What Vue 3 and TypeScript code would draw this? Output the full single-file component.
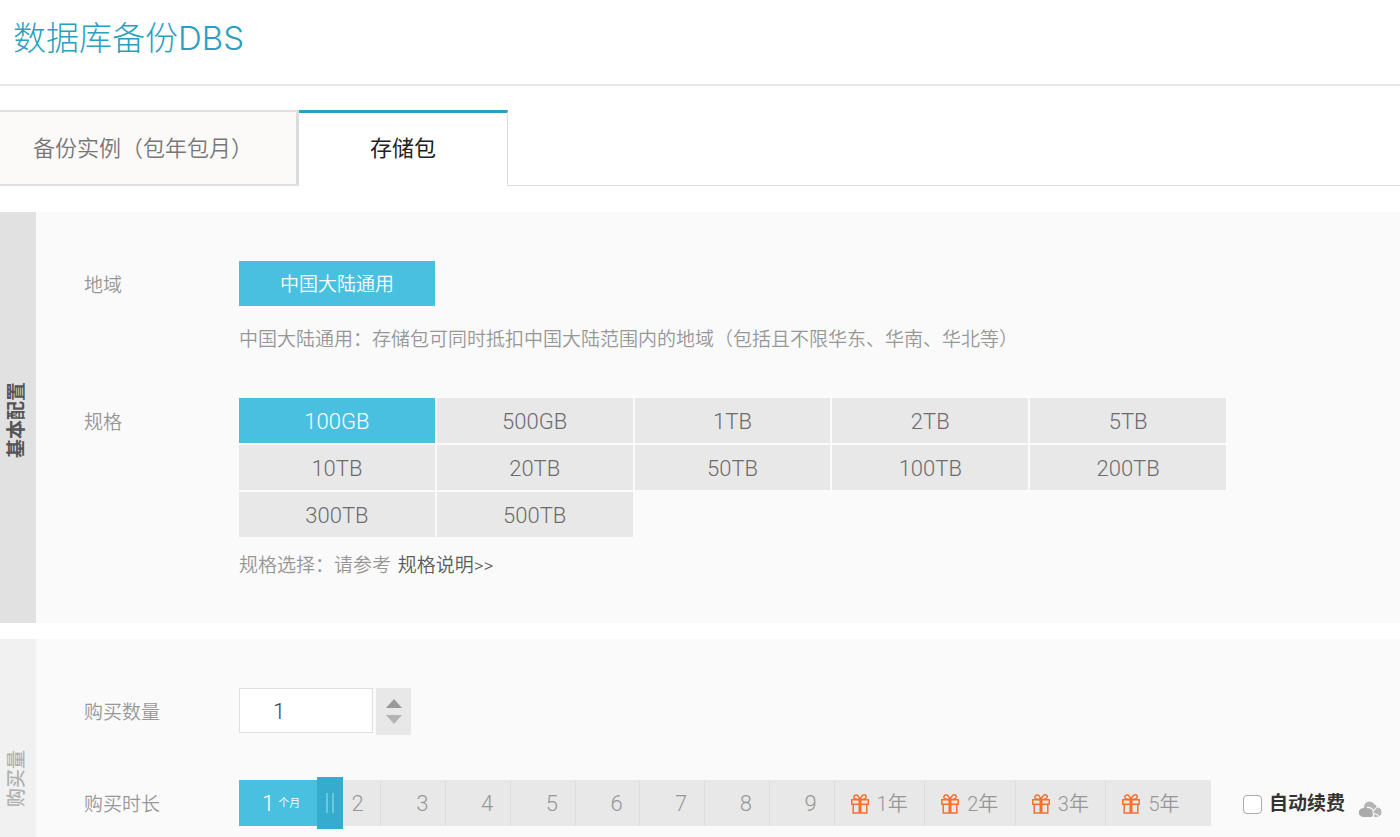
<script setup lang="ts">
import { ref } from 'vue'

interface Term {
  value: string
  gift: boolean
}

const tabs = ['备份实例（包年包月）', '存储包']
const activeTab = ref(1)

const specs = [
  '100GB', '500GB', '1TB', '2TB', '5TB',
  '10TB', '20TB', '50TB', '100TB', '200TB',
  '300TB', '500TB',
]
const spec = ref('100GB')

const quantity = ref(1)
const terms: Term[] = [
  ...[2, 3, 4, 5, 6, 7, 8, 9].map((n) => ({ value: String(n), gift: false })),
  ...[1, 2, 3, 5].map((n) => ({ value: `${n}年`, gift: true })),
]
const term = ref(0)
const autoRenew = ref(false)
</script>

<template>
  <div class="page">
    <header class="header">
      <h1>数据库备份DBS</h1>
    </header>

    <nav class="tabs">
      <button
        v-for="(tab, i) in tabs"
        :key="tab"
        type="button"
        class="tab"
        :class="{ active: i === activeTab }"
        @click="activeTab = i"
      >{{ tab }}</button>
      <span class="tabs-rest"></span>
    </nav>

    <section class="panel">
      <h2 class="side"><span>基本配置</span></h2>
      <div class="body">
        <div class="row">
          <span class="label">地域</span>
          <div class="value">
            <div class="grid"><button type="button" class="option region selected">中国大陆通用</button></div>
            <p class="hint region-hint">中国大陆通用：存储包可同时抵扣中国大陆范围内的地域（包括且不限华东、华南、华北等）</p>
          </div>
        </div>
        <div class="row">
          <span class="label">规格</span>
          <div class="value">
            <div class="grid">
              <button
                v-for="s in specs"
                :key="s"
                type="button"
                class="option"
                :class="{ selected: s === spec }"
                @click="spec = s"
              >{{ s }}</button>
            </div>
            <p class="hint">规格选择：请参考 <a href="#spec">规格说明&gt;&gt;</a></p>
          </div>
        </div>
      </div>
    </section>

    <section class="panel purchase">
      <h2 class="side light"><span>购买量</span></h2>
      <div class="body">
        <div class="row">
          <label class="label" for="quantity">购买数量</label>
          <div class="quantity">
            <input id="quantity" v-model.number="quantity" type="text" inputmode="numeric">
            <div class="stepper">
              <button type="button" aria-label="增加" @click="quantity++">
                <svg width="16" height="9" viewBox="0 0 16 9"><path d="M8 0 16 9H0z" fill="#999" /></svg>
              </button>
              <button type="button" aria-label="减少" @click="quantity = Math.max(1, quantity - 1)">
                <svg width="16" height="9" viewBox="0 0 16 9"><path d="M0 0h16L8 9z" fill="#b3b3b3" /></svg>
              </button>
            </div>
          </div>
        </div>
        <div class="row">
          <label class="label" for="term">购买时长</label>
          <div class="duration">
            <div class="track">
              <button type="button" class="segment first" @click="term = 0">1<small>个月</small></button>
              <button
                v-for="(t, i) in terms"
                :key="t.value"
                type="button"
                class="segment"
                :class="{ year: t.gift }"
                @click="term = i + 1"
              >
                <svg v-if="t.gift" width="18" height="20" viewBox="0 0 18 20" fill="none" stroke="#f5702f" stroke-width="1.5">
                  <path d="M.8 5.800h16.400v4.400H.8zM2.200 10.200v8.900h13.600v-8.900" />
                  <path d="M9 6v13" stroke-width="3" />
                  <path d="M8.600 5.600C5.500 5.600 2.800 5 2.800 3.200 2.800.7 6 .3 7.200 2c.9 1.200 1.400 2.400 1.400 3.600zM9.400 5.600C9.400 4 10.300 2.400 11.600 1.400c1.700-1.300 3.900-.4 3.600 1.500-.3 1.900-2.800 2.700-5.800 2.700z" />
                </svg>
                <span>{{ t.value }}</span>
              </button>
              <input id="term" v-model.number="term" class="handle" type="range" min="0" max="12">
            </div>
            <label class="renew">
              <input v-model="autoRenew" type="checkbox">
              <span>自动续费</span>
            </label>
            <svg class="cloud" width="23" height="17" viewBox="0 0 23 17">
              <circle cx="10.500" cy="6" r="5.500" fill="#b5b5b5" />
              <path d="M4.500 16a4.500 4.500 0 0 1-.4-9c2-.4 3.400.2 4.400 1.200 2.400-.2 4.200.9 5 2.800 1.200 2.600-.2 5-2.500 5z" fill="#aaa" />
              <path d="M11 3.500c4-1.500 6.500.5 7 2.800 5 .2 6 6.500 2.500 8.700-1.500 1-4 1-6.500 1z" fill="#b5b5b5" />
              <path d="M8 6.500c3-.5 5 .8 6.500 3.500M18.500 5.500 14 10.500l1 5.500M15 12.500l5 2" fill="none" stroke="#fafafa" stroke-width="1.100" />
            </svg>
          </div>
        </div>
      </div>
    </section>
  </div>
</template>

<style>
body {
  margin: 0;
}
</style>

<style scoped>
.page {
  height: 100vh;
  overflow: hidden;
  background: #fff;
  color: #979797;
  font-family: Roboto, "Noto Sans CJK SC", sans-serif;
  font-size: 19px;
  font-weight: 350;
  line-height: 28px;
}

.page * {
  box-sizing: border-box;
}

button,
input {
  margin: 0;
  padding: 0;
  border: 0;
  border-radius: 0;
  font: inherit;
  color: inherit;
}

button {
  cursor: pointer;
}

.header {
  height: 86px;
  padding: 14px 13px 0;
  border-bottom: 2px solid #e8e8e8;
}

h1 {
  margin: 0;
  color: #2a9fbf;
  font-family: Inter, "Noto Sans CJK SC", sans-serif;
  font-size: 33px;
  font-weight: 300;
  line-height: 48px;
}

.tabs {
  display: flex;
  height: 76px;
  margin: 24px 0 26px;
}

.tab {
  width: 299px;
  padding: 2px 10px 0 0;
  border-top: 2px solid #e0e0e0;
  border-right: 3px solid #ddd;
  border-bottom: 2px solid #e0e0e0;
  background: #fbfaf8;
  color: #777;
  font-size: 22px;
}

.tab.active {
  width: 209px;
  padding: 0 0 2px;
  border-top: 3px solid #2a9fbf;
  border-right: 1px solid #ddd;
  border-bottom: 0;
  background: #fff;
  color: #222;
  font-weight: 400;
}

.tabs-rest {
  flex: 1;
  border-bottom: 1px solid #ddd;
}

.panel {
  display: flex;
  margin-bottom: 16px;
  background: #fafafa;
}

.purchase {
  min-height: 274px;
}

.side {
  display: flex;
  flex: none;
  align-items: center;
  justify-content: center;
  width: 36px;
  margin: 0;
  padding: 6px 2px 0 0;
  background: #e1e1e1;
  color: #555;
  font-size: 19px;
  font-weight: 700;
}

.side.light {
  background: #f1f1f1;
  color: #b0b0b0;
  font-weight: 500;
}

.side span {
  writing-mode: vertical-rl;
  text-orientation: sideways;
  transform: rotate(180deg);
}

.body {
  flex: 1;
  min-width: 0;
  padding: 49px 16px 43px 48px;
}

.row {
  display: flex;
  align-items: flex-start;
}

.row + .row {
  margin-top: 44px;
}

.row:has(.quantity) + .row {
  margin-top: 43px;
}

.label {
  flex: none;
  width: 155px;
  line-height: 49px;
}

.value {
  flex: 1;
}

.grid {
  display: grid;
  grid-template-columns: repeat(5, 1fr);
  gap: 2px;
  max-width: 987px;
}

.option {
  height: 45px;
  padding-top: 2px;
  background: #e8e8e8;
  color: #6c6c6c;
  font-size: 22px;
}

.option.selected {
  background: #49c0e0;
  color: #fff;
}

.option.region {
  font-size: 19px;
}

.hint {
  margin: 15px 0 0;
}

.region-hint {
  margin-top: 20px;
}

.hint a {
  margin-left: 2px;
  color: #5c5c5c;
  text-decoration: none;
}

.quantity {
  display: flex;
  gap: 3px;
}

.quantity input {
  width: 134px;
  height: 45px;
  padding: 2px 0 0 33px;
  border: 1px solid #e0e0e0;
  background: #fff;
  color: #444;
  font-size: 22px;
}

.stepper {
  display: flex;
  flex-direction: column;
  justify-content: center;
  gap: 7px;
  width: 35px;
  height: 47px;
  background: #e8e8e8;
}

.stepper button {
  display: flex;
  justify-content: center;
  background: none;
}

.duration {
  display: flex;
  flex: 1;
  align-items: center;
}

.track {
  position: relative;
  display: grid;
  flex: 0 1 972px;
  grid-template-columns: 78fr repeat(8, 65fr) repeat(3, 91fr) 105fr;
  height: 46px;
  background: #e8e8e8;
}

.segment {
  display: flex;
  align-items: center;
  justify-content: center;
  padding: 2px 0 0 18px;
  border-right: 1px solid #ddd;
  background: none;
  font-size: 22px;
}

.segment:nth-last-child(2) {
  border-right: 0;
}

.segment.first {
  justify-content: flex-start;
  gap: 4px;
  padding-left: 23px;
  border-right: 0;
  background: #49c0e0;
  color: #fff;
}

.segment small {
  font-size: 11px;
}

.segment.year {
  justify-content: flex-start;
  gap: 8px;
  padding-left: 16px;
  font-size: 20px;
}

.handle {
  position: absolute;
  top: -3px;
  left: 78px;
  width: calc(100% - 78px);
  height: 52px;
  appearance: none;
  background: none;
  pointer-events: none;
}

.handle::-webkit-slider-thumb {
  width: 26px;
  height: 52px;
  appearance: none;
  background:
    linear-gradient(#6cc6de, #6cc6de) 9px 16px / 2px 20px no-repeat,
    linear-gradient(#6cc6de, #6cc6de) 15px 16px / 2px 20px no-repeat,
    #35acce;
  pointer-events: auto;
}

.renew {
  display: flex;
  align-items: center;
  gap: 7px;
  margin-left: 32px;
  padding-top: 2px;
  color: #333;
  font-weight: 700;
  white-space: nowrap;
}

.renew input {
  width: 19px;
  height: 19px;
  border: 1px solid #aaa;
  border-radius: 4px;
  appearance: none;
  background: #fff;
}

.renew input:checked {
  background: #49c0e0;
}

.cloud {
  flex: none;
  margin: 12px 0 0 14px;
}
</style>
